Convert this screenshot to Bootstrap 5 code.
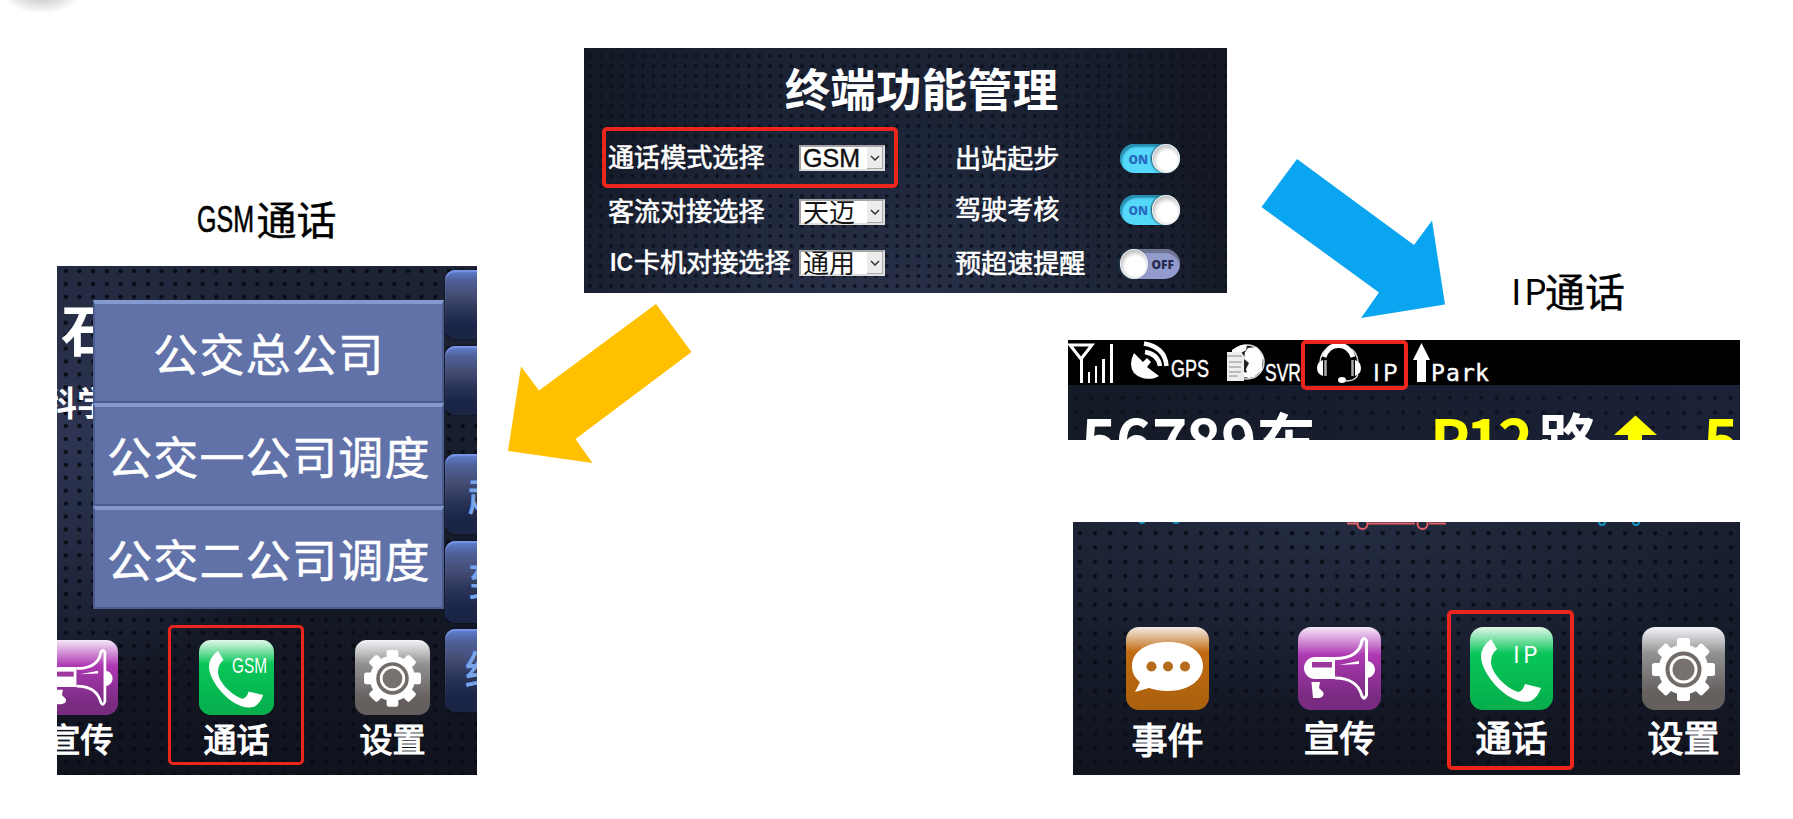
<!DOCTYPE html>
<html lang="zh-CN">
<head>
<meta charset="utf-8">
<meta name="viewport" content="width=device-width, initial-scale=1">
<title>终端功能管理</title>
<link href="https://cdn.jsdelivr.net/npm/bootstrap@5.3.0/dist/css/bootstrap.min.css" rel="stylesheet">
<style>
body{background:#fff;font-family:"Noto Sans CJK SC",sans-serif;overflow:hidden}
/* page grid: left terminal, settings panel and right-hand terminal share overlapping tracks */
.board{display:grid;width:1793px;height:819px;overflow:hidden;
 grid-template-columns:57px 420px 107px 484px 159px 513px;grid-template-rows:48px 147px 71px 27px 47px 100px 82px 253px 1fr}
.screen{position:relative;overflow:hidden;background-color:#151a28;color:#fff}
.settings{grid-area:2/4/5/6;background:
 radial-gradient(circle at 2px 2px,#0c101b 0 1.2px,transparent 2.4px) 4px 6px/10.6px 10px,
 radial-gradient(ellipse 62% 90% at 46% 108%,#343b58a0,#262f4680 55%,transparent),linear-gradient(90deg,#141926,#1a2234 30%,#1a2234 65%,#131722)}
.gsm-title{grid-area:2/2/4/3}
.gsm-screen{grid-area:4/2/9/3;background:
 radial-gradient(circle at 2px 2px,#080b13 0 1.5px,transparent 2.7px) 6.7px 3px/13.7px 12.93px,
 radial-gradient(ellipse 260px 270px at 0 165px,#2e3654,transparent),linear-gradient(#1c2334,#151a28 60%,#10131d)}
.ip-title{grid-area:3/6/5/7}
.ip-top{grid-area:6/4/7/7;margin-left:484px;background:
 radial-gradient(circle at 2px 2px,#0c101b 0 1.3px,transparent 2.7px) 5.7px 55.7px/15.6px 14.9px,linear-gradient(90deg,#151a27,#1b2238)}
.ip-bottom{grid-area:8/5/9/7;margin-left:5px;background:
 radial-gradient(circle at 2px 2px,#0a0d16 0 1.5px,transparent 2.9px) 4.8px 9px/15.15px 14.33px,
 radial-gradient(ellipse 400px 180px at 40% 0,#242c42,transparent),linear-gradient(#1a2030,#151a29 60%,#11141e)}
.caption{color:#000;font-size:40px;line-height:1;-webkit-text-stroke:.4px #000}
.panel-title{font-size:45.6px;font-weight:700;line-height:62px;padding-top:8px}
.cols{padding:0 47px 0 24px}
.opt{font-size:26.1px;line-height:1;white-space:nowrap;-webkit-text-stroke:.6px #fff;position:relative;top:-1.5px}
.pick{width:86px;height:26.5px;border:2px solid #a5a5a5;border-right-color:#ddd;border-bottom-color:#ddd;background:#fff;color:#151515;font-size:26px;line-height:20px}
.pick .drop{width:16px;background:#ececec;border-right:1px solid #aaa;border-bottom:1px solid #aaa}
.tog{position:relative;width:60.5px;height:29.5px;border-radius:15px;background:#54d9fb;box-shadow:inset 2px 3px 2px #268cb0;font:800 12px "Open Sans","Noto Sans",sans-serif;color:#276bc0}
.tog span{line-height:31px;margin-left:9px}
.tog i{position:absolute;right:0;top:0;width:28.5px;height:29.5px;border-radius:50%;background:radial-gradient(circle at 55% 58%,#fff 45%,#bbb 75%);border:1px solid #eee;box-shadow:-1px 0 2px #245}
.tog.off{background:#929bcb;box-shadow:inset 0 4px 1px #6d7390;color:#252c4b}
.tog.off i{left:0}.tog.off span{margin-left:32px}
.mark-box{position:absolute;border:4px solid #ec261c;border-radius:5px;pointer-events:none}
.menu{position:absolute;left:35.5px;top:34px;width:351px;z-index:2}
.menu div{height:102.9px;background:#6172a8;border:2px solid #4c5c8f;border-top:4px solid #8499d0;font-size:45px;letter-spacing:1.25px;line-height:98px;text-align:center;white-space:nowrap;padding-left:2px;-webkit-text-stroke:.5px #fff}
.side{position:absolute;left:388px;top:4px;width:60px}
.side div{border-radius:10px;background:linear-gradient(#6280d2 0,#4e6098 15%,#444b72 38%,#2a3558 58%,#192448 82%,#1b2544);box-shadow:inset 0 2px 1px #7794e6,0 0 2px #080c18;color:#79a5ea;font-size:40px;-webkit-text-stroke:.8px #79a5ea;line-height:78px;padding-left:23px;white-space:nowrap}
.behind{position:absolute;font-weight:700;line-height:1;white-space:nowrap}
.app{text-align:center;line-height:1;white-space:nowrap}
.app b{font-weight:400;-webkit-text-stroke:1.2px #fff}
.app svg{display:block}
.apps-left{position:absolute;left:-14px;top:374px;gap:81px}
.apps-left .app{width:75px;font-size:33px}.apps-left .app b{display:block;margin:7px -5px 0}
.apps-right{position:absolute;left:53px;top:104.5px;gap:89px}
.apps-right .app{width:83px;font-size:36px}.apps-right .app b{display:block;margin:8px -5px 0}
.over{position:absolute;left:0;top:0;pointer-events:none}
</style>
</head>
<body>
<svg width="0" height="0" class="position-absolute">
 <defs>
  <linearGradient id="go" x2="0" y2="1"><stop stop-color="#f3ece6"/><stop offset=".3" stop-color="#c16b12"/><stop offset="1" stop-color="#aa600c"/></linearGradient>
  <linearGradient id="gp" x2="0" y2="1"><stop stop-color="#f5e8f8"/><stop offset=".34" stop-color="#ae38b3"/><stop offset=".85" stop-color="#782b80"/></linearGradient>
  <linearGradient id="gg" x2="0" y2="1"><stop stop-color="#e2f8e9"/><stop offset=".32" stop-color="#08c659"/><stop offset="1" stop-color="#06ae4b"/></linearGradient>
  <linearGradient id="gs" x2="0" y2="1"><stop stop-color="#f5f5fa"/><stop offset=".32" stop-color="#919191"/><stop offset=".8" stop-color="#655f5e"/></linearGradient>
  <symbol id="talk" viewBox="0 0 83 83"><rect width="83" height="83" rx="13" fill="url(#go)"/><path d="M42 15C20 15 6 25 6 39c0 7 3 12 8 16L9 65l14-4c6 2 12 3 19 3 21 0 35-11 35-25S63 15 42 15Z" fill="#fff"/><g fill="#b56b1b"><circle cx="25.500" cy="39.500" r="5"/><circle cx="42" cy="39.500" r="5"/><circle cx="59" cy="39.500" r="5"/></g></symbol>
  <symbol id="horn" viewBox="0 0 83 83"><rect width="83" height="83" rx="13" fill="url(#gp)"/><path d="M37 30H17a11 11 0 0 0 0 22h20Z" fill="#fff"/><rect x="14" y="35" width="20" height="5.500" fill="#9d389f"/><path d="M37 31.500c14 0 25-5 27-18q2-4 4.500 0V68q-2 6-4.500 1C61 57 51 51 37 51" fill="none" stroke="#fff" stroke-width="3"/><path d="M41 38l20-4v3l-20 1ZM69 34c4 0 8 4 8 8.500S73 51 69 51Z" fill="#fff"/><path d="M13.500 55h8.500l-1 6 4 4c2 4-2 6-5 6h-5Z" fill="#fff"/></symbol>
  <symbol id="call" viewBox="0 0 83 83"><rect width="83" height="83" rx="13" fill="url(#gg)"/><path d="M21 12 27 22Q21 27 21 35C21 46 36 61 48 65q5-1 7-8l16 4Q68 70 61 74C40 80 11 48 11 29Q11 20 21 12Z" fill="#fff"/></symbol>
  <symbol id="gear" viewBox="0 0 83 83"><rect width="83" height="83" rx="13" fill="url(#gs)"/><g fill="#fff" transform="translate(41.500 42.500)"><circle r="25"/><g id="tooth"><rect x="-6.500" y="-31.500" width="13" height="63" rx="2.500"/><rect x="-31.500" y="-6.500" width="63" height="13" rx="2.500"/></g><use href="#tooth" transform="rotate(45)"/><circle r="18" fill="#726c69"/><circle r="14"/><circle r="11" fill="#77716f"/></g></symbol>
 </defs>
</svg>

<main class="board position-relative">
 <section class="screen settings">
  <h1 class="panel-title text-center m-0" style="padding-left:32px">终端功能管理</h1>
  <div class="cols d-flex justify-content-between">
   <div style="width:277px">
    <div class="d-flex align-items-center justify-content-between" style="height:52px;margin-top:14px"><span class="opt">通话模式选择</span><div class="pick d-flex justify-content-between"><svg width="64" height="23"><text x="2" y="20" font-family="Liberation Sans" font-size="26" textLength="57" lengthAdjust="spacingAndGlyphs" fill="#111" stroke="#111" stroke-width=".4">GSM</text></svg><span class="drop d-flex align-items-center justify-content-center"><svg width="10" height="6"><path d="M1 1l4 4 4-4" fill="none" stroke="#333" stroke-width="1.500"/></svg></span></div></div>
    <div class="d-flex align-items-center justify-content-between" style="height:56px"><span class="opt">客流对接选择</span><div class="pick d-flex justify-content-between"><span style="padding-left:2px">天迈</span><span class="drop d-flex align-items-center justify-content-center"><svg width="10" height="6"><path d="M1 1l4 4 4-4" fill="none" stroke="#333" stroke-width="1.500"/></svg></span></div></div>
    <div class="d-flex align-items-center justify-content-between" style="height:46px"><span class="opt d-flex align-items-center"><svg width="26" height="26"><text x="2" y="22" font-family="Liberation Sans" font-size="26" font-weight="700" fill="#fff" textLength="23" lengthAdjust="spacingAndGlyphs" style="-webkit-text-stroke:0">IC</text></svg>卡机对接选择</span><div class="pick d-flex justify-content-between"><span style="padding-left:2px">通用</span><span class="drop d-flex align-items-center justify-content-center"><svg width="10" height="6"><path d="M1 1l4 4 4-4" fill="none" stroke="#333" stroke-width="1.500"/></svg></span></div></div>
   </div>
   <div style="width:225px">
    <div class="d-flex align-items-center justify-content-between" style="height:52px;margin-top:14.500px"><span class="opt">出站起步</span><div class="tog"><span>ON</span><i></i></div></div>
    <div class="d-flex align-items-center justify-content-between" style="height:51px"><span class="opt">驾驶考核</span><div class="tog"><span>ON</span><i></i></div></div>
    <div class="d-flex align-items-center justify-content-between" style="height:57px"><span class="opt">预超速提醒</span><div class="tog off"><span>OFF</span><i></i></div></div>
   </div>
  </div>
  <div class="mark-box" style="left:18px;top:79px;width:295.500px;height:60.500px"></div>
 </section>

 <h2 class="caption gsm-title m-0 d-flex align-items-end justify-content-center fw-normal" style="padding:0 2px 28px 0"><svg width="61" height="40"><text x="1" y="34" font-family="Liberation Sans" font-size="37" textLength="57" lengthAdjust="spacingAndGlyphs" stroke="#000" stroke-width=".6">GSM</text></svg>通话</h2>

 <section class="screen gsm-screen">
  <span class="behind" style="left:4px;top:33px;font-size:56px">石</span>
  <span class="behind" style="left:-14px;top:119px;font-size:34px">科学</span>
  <div class="menu"><div>公交总公司</div><div>公交一公司调度</div><div>公交二公司调度</div></div>
  <div class="side">
   <div style="height:68.500px"></div><div style="height:69.500px;margin-top:7px"></div>
   <div style="height:80px;margin-top:39px">起</div><div style="height:82px;margin-top:7px">到</div><div style="height:83px;margin-top:6px;padding-left:20px">终</div>
  </div>
  <div class="apps-left d-flex">
   <div class="app"><svg width="75" height="75"><use href="#horn"/></svg><b>宣传</b></div>
   <div class="app"><svg width="75" height="75"><use href="#call"/><text x="33" y="33" font-family="Liberation Sans" font-size="22" font-weight="400" fill="#fff" textLength="35" lengthAdjust="spacingAndGlyphs">GSM</text></svg><b>通话</b></div>
   <div class="app"><svg width="75" height="75"><use href="#gear"/></svg><b>设置</b></div>
  </div>
  <div class="mark-box" style="left:111px;top:359px;width:135.500px;height:140px;border-width:3px"></div>
 </section>

 <h2 class="caption ip-title m-0 fw-normal d-flex align-items-start" style="padding:75px 0 0 284px"><svg width="34" height="40"><text y="35" font-family="Noto Sans CJK SC" font-size="36" x="0 13">IP</text></svg>通话</h2>

 <section class="screen ip-top">
  <svg class="d-block" width="672" height="100" fill="#fff">
   <rect width="672" height="45" fill="#000"/>
   <path d="M2 5h22L13 19Z M13.500 18V43" fill="none" stroke="#fff" stroke-width="3"/><path d="M20 32h2v11h-2zM27 26h2v17h-2zM34 19h3v24h-3zM42 4h3v39h-3z"/>
   <path d="M66 13 75 22 79 18 83 22 79 27 91 36C83 41 72 39 66 33Q60 25 66 13Z"/><path d="M77 12Q90 14 92 26M76 3.500Q97 7 98.500 26" fill="none" stroke="#fff" stroke-width="4.500"/>
   <g font-family="Liberation Sans" font-size="23" stroke="#fff" stroke-width=".4"><text x="103" y="37" textLength="38" lengthAdjust="spacingAndGlyphs">GPS</text><text x="197" y="41" textLength="36" lengthAdjust="spacingAndGlyphs">SVR</text><text x="305 315" y="41" font-family="Noto Sans CJK SC">IP</text></g>
   <circle cx="179" cy="22" r="17" fill="#222" stroke="#ddd" stroke-width="1.500"/><path d="M164 10q8-6 15-5l-1 5-5 3-9-1ZM180 8l9-1 6 10-1 13-8 7-6 1-2-9 3-6-5-4 1-7ZM176 32l8 2-2 4-7-1Z"/>
   <path d="M159 12h14l3 4v25h-17Z" fill="#eee"/><path d="M159 16h15M161 22h13M161 27h12M161 32h12M161 36h9" stroke="#888" stroke-width="1.200"/>
   <path d="M256 17C259 8 264 5.500 270.500 5.500S282 8 285 17" fill="none" stroke="#fff" stroke-width="5"/><path d="M255 20v16q-6-2-6-8t6-8ZM287 20v16q6-2 6-8t-6-8Z"/><path d="M257.500 20v16M284.500 20v16" stroke="#aaa" stroke-width="2.500"/><path d="M252 22Q253 12 259 9M290 22Q289 12 283 9M290 35Q287 41 278 41" fill="none" stroke="#ddd" stroke-width="1.400"/><ellipse cx="274" cy="40" rx="4" ry="3"/>
   <path d="M353.500 3 362 20h-4v22h-9V20h-4Z"/><text x="363 378 393 407" y="41" font-family="DejaVu Sans Mono" font-size="23" stroke="#fff" stroke-width=".4">Park</text>
   <g font-family="Noto Sans CJK SC" font-weight="700" font-size="60"><text x="13 48 84 118 153" y="123">56789</text><text x="188" y="124">东</text><text x="362 398 430" y="123" fill="#ff0">P12</text><text x="470" y="124">路</text><text x="635" y="123" fill="#ff0">5</text></g>
   <path d="M567.500 75.500 589 95h-15v5h-14v-5h-14Z" fill="#ff0"/>
  </svg>
  <div class="mark-box" style="left:233px;top:0;width:106.500px;height:50px"></div>
 </section>

 <section class="screen ip-bottom">
  <svg class="over" width="667" height="20" fill="none" stroke-width="2"><path d="M274 1.500h10M295 1.500h47M356 1.500h17" stroke="#e66068"/><g stroke="#e66068"><circle cx="289.500" cy="2" r="5"/><circle cx="349.500" cy="2" r="5"/></g><g stroke="#1593c4"><circle cx="69" cy="-2" r="3"/><circle cx="103" cy="-2" r="3"/><circle cx="529" cy="0" r="3"/><circle cx="563" cy="0" r="3"/></g></svg>
  <div class="apps-right d-flex">
   <div class="app"><svg width="83" height="83"><use href="#talk"/></svg><b class="pt-1" style="margin-top:6px">事件</b></div>
   <div class="app"><svg width="83" height="83"><use href="#horn"/></svg><b>宣传</b></div>
   <div class="app"><svg width="83" height="83"><use href="#call"/><text x="43 53" y="36" font-family="Noto Sans CJK SC" font-size="23" font-weight="400" fill="#fff">IP</text></svg><b>通话</b></div>
   <div class="app"><svg width="83" height="83"><use href="#gear"/></svg><b>设置</b></div>
  </div>
  <div class="mark-box" style="left:374px;top:88px;width:126.500px;height:159.500px"></div>
 </section>

 <svg class="over" width="1793" height="819"><defs><radialGradient id="sh"><stop stop-color="#000" stop-opacity=".3"/><stop offset="1" stop-color="#000" stop-opacity="0"/></radialGradient></defs>
  <ellipse cx="42" cy="-10" rx="42" ry="24" fill="url(#sh)"/>
  <path d="M656 304 691.500 352 575.500 439 592.500 463 508 451 521 366.500 539 390.500Z" fill="#ffc000"/>
  <path d="M1297 159 1414 245 1432 220.500 1445 304.500 1361 318 1379 292.500 1261.500 207Z" fill="#0aa5f0"/>
 </svg>
</main>
<script src="https://cdn.jsdelivr.net/npm/bootstrap@5.3.0/dist/js/bootstrap.bundle.min.js"></script>
</body>
</html>
